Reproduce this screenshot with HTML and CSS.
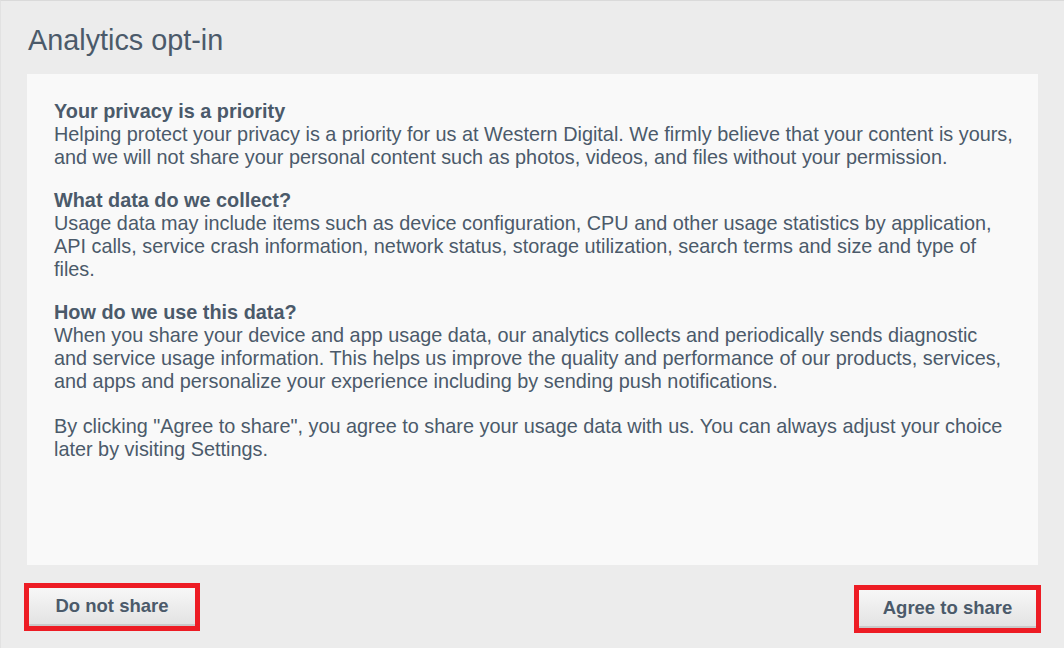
FILE: index.html
```html
<!DOCTYPE html>
<html>
<head>
<meta charset="utf-8">
<link rel="stylesheet" href="styles.css">
</head>
<body>
<div class="dialog">
  <h1 class="title">Analytics opt-in</h1>
  <div class="panel">
    <div class="section">
      <h2 class="heading">Your privacy is a priority</h2>
      <p class="text">Helping protect your privacy is a priority for us at Western Digital. We firmly believe that your content is yours, and we will not share your personal content such as photos, videos, and files without your permission.</p>
    </div>
    <div class="section">
      <h2 class="heading">What data do we collect?</h2>
      <p class="text">Usage data may include items such as device configuration, CPU and other usage statistics by application, API calls, service crash information, network status, storage utilization, search terms and size and type of files.</p>
    </div>
    <div class="section section-wide">
      <h2 class="heading">How do we use this data?</h2>
      <p class="text">When you share your device and app usage data, our analytics collects and periodically sends diagnostic and service usage information. This helps us improve the quality and performance of our products, services, and apps and personalize your experience including by sending push notifications.</p>
    </div>
    <div class="section">
      <p class="text">By clicking "Agree to share", you agree to share your usage data with us. You can always adjust your choice later by visiting Settings.</p>
    </div>
  </div>
  <div class="actions">
    <div class="highlight highlight-left"><button class="btn btn-decline">Do not share</button></div>
    <div class="highlight highlight-right"><button class="btn btn-agree">Agree to share</button></div>
  </div>
</div>
</body>
</html>
```
FILE: styles.css
```css
html, body {
  margin: 0;
  padding: 0;
  height: 100%;
}
body {
  background: #ececec;
  font-family: "Liberation Sans", Arial, sans-serif;
  color: #4b5a6a;
}
.dialog {
  box-sizing: border-box;
  height: 648px;
  border-top: 1px solid #dadada;
  border-left: 1px solid #e2e2e2;
  padding: 0 26px 0 26px;
  display: flex;
  flex-direction: column;
}
.title {
  margin: 0;
  padding: 23px 0 0 1px;
  height: 73px;
  box-sizing: border-box;
  font-size: 28.8px;
  font-weight: normal;
  line-height: 33px;
  color: #4b5a6a;
}
.panel {
  background: #f9f9f9;
  height: 491px;
  box-sizing: border-box;
  padding: 26px 25px 0 27px;
}
.section {
  margin-bottom: 20px;
}
.section-wide {
  margin-bottom: 22px;
}
.heading {
  margin: 0;
  font-size: 19.85px;
  font-weight: bold;
  line-height: 23px;
}
.text {
  margin: 0;
  font-size: 19.85px;
  line-height: 23px;
}
.actions {
  display: flex;
  justify-content: space-between;
  align-items: flex-start;
  padding: 18px 0 0 0;
}
.highlight {
  border: 5px solid #ed1c24;
  display: flex;
}
.highlight-left {
  margin-left: -3px;
}
.highlight-right {
  margin-right: -3px;
  margin-top: 2px;
}
.btn {
  font-family: "Liberation Sans", Arial, sans-serif;
  font-size: 18.5px;
  font-weight: bold;
  color: #4b5a6a;
  border: none;
  border-bottom: 2px solid #c9c9c9;
  background: linear-gradient(#f7f7f7, #e3e3e3);
  height: 38px;
  padding: 0;
  cursor: pointer;
}
.btn-decline {
  width: 166px;
}
.btn-agree {
  width: 177px;
}
```
